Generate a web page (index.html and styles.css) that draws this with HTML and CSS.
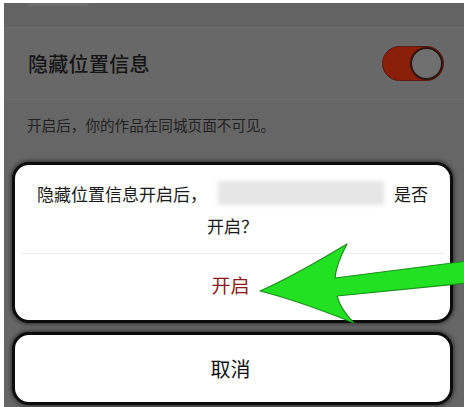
FILE: index.html
```html
<!DOCTYPE html>
<html lang="zh">
<head>
<meta charset="utf-8">
<link rel="stylesheet" href="styles.css">
</head>
<body>
<div class="screen">
  <div class="top-strip"><span class="ghost"></span></div>
  <div class="setting-row">
    <span class="setting-title">隐藏位置信息</span>
    <span class="toggle"><span class="knob"></span></span>
  </div>
  <div class="setting-desc">开启后，你的作品在同城页面不可见。</div>

  <div class="sheet">
    <div class="card main">
      <div class="message">
        <div class="line1">隐藏位置信息开启后，<span class="blur"></span>是否</div>
        <div class="line2">开启？</div>
      </div>
      <div class="confirm">开启</div>
    </div>
    <div class="card cancel">取消</div>
  </div>

  <svg class="arrow" width="220" height="90" viewBox="0 0 220 90">
    <path d="M8 54 C 40 40, 70 22, 95 7 C 88 20, 84 30, 83 41 L 216 24 L 216 46 L 85 59 C 88 70, 94 78, 102 86 C 72 74, 40 62, 8 54 Z" fill="#22e022" stroke="#1a8f1a" stroke-width="1.2" stroke-linejoin="round"/>
  </svg>
</div>
</body>
</html>
```

FILE: styles.css
```css
* { box-sizing: border-box; }
html, body { margin: 0; padding: 0; background: #fff; }
body { width: 464px; height: 407px; overflow: hidden; font-family: "Noto Sans CJK SC", "Noto Sans", sans-serif; }

.screen {
  position: relative;
  margin: 3px 0 0 4px;
  height: 404px;
  background: #666666;
  overflow: hidden;
}

.top-strip {
  height: 25px;
  background: #636363;
  border-bottom: 1px solid #6e6e6e;
  position: relative;
}
.ghost {
  display: block;
  margin-left: 24px;
  width: 60px;
  height: 3px;
  background: #707070;
  filter: blur(1px);
}

.setting-row {
  height: 72px;
  display: flex;
  align-items: center;
  justify-content: space-between;
  padding: 0 20px 0 24px;
  background: #686868;
  border-bottom: 1px solid #6c6c6c;
}
.setting-title {
  font-size: 20px;
  color: #151515;
  font-weight: 500;
  letter-spacing: 0.3px;
}
.toggle {
  width: 62px;
  height: 35px;
  border-radius: 18px;
  background: #8a1e08;
  border: 1.5px solid #5a1a10;
  display: flex;
  justify-content: flex-end;
  align-items: center;
  padding: 0;
}
.knob {
  width: 33px;
  height: 33px;
  border-radius: 50%;
  background: #6f6f6f;
  border: 2px solid #2a1510;
}

.setting-desc {
  padding: 14px 0 0 23px;
  font-size: 14.6px;
  color: #222;
}

.sheet {
  position: absolute;
  left: 8px;
  top: 159px;
  width: 441px;
  display: flex;
  flex-direction: column;
  gap: 9px;
}
.card {
  background: #fff;
  border: 3px solid #0c0c0c;
  border-radius: 17px;
  box-shadow: 0 0 4px 1px rgba(0,0,0,0.55);
}
.main {
  height: 161px;
  display: flex;
  flex-direction: column;
}
.message {
  height: 89px;
  border-bottom: 1px solid #ececec;
  margin: 0 6px;
  padding-top: 18px;
  text-align: center;
  font-size: 17px;
  color: #1a1a1a;
  line-height: 33px;
}
.line1 {
  display: flex;
  align-items: center;
  justify-content: space-between;
  padding: 0 16px 0 16px;
  height: 22px;
  line-height: 22px;
}
.blur {
  display: inline-block;
  width: 166px;
  height: 24px;
  background: #e6e6e6;
  filter: blur(2px);
  margin-top: -2px;
}
.line2 { line-height: 22px; margin-top: 10px; }
.confirm {
  flex: 1;
  display: flex;
  align-items: center;
  justify-content: center;
  color: #8c1a1a;
  font-size: 19px;
  padding-bottom: 6px;
  padding-right: 4px;
}
.cancel {
  height: 73px;
  display: flex;
  align-items: center;
  justify-content: center;
  font-size: 20px;
  color: #111;
  padding-right: 4px;
}

.arrow {
  position: absolute;
  left: 248px;
  top: 234px;
}
```
